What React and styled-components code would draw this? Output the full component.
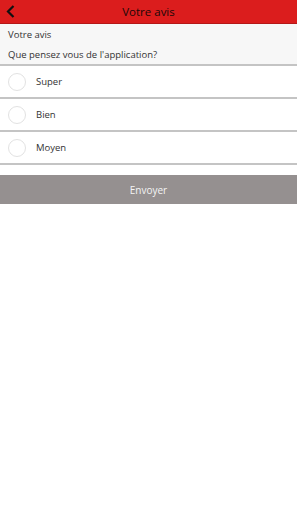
import React from 'react'
import styled, { createGlobalStyle } from 'styled-components'

const GlobalStyle = createGlobalStyle`
  html, body {
    margin: 0;
    padding: 0;
    background: #ffffff;
    font-family: "Open Sans", "Noto Sans", sans-serif;
  }
`

const Page = styled.div`
  width: 297px;
  min-height: 512px;
  background: #ffffff;
`

const TopBar = styled.header`
  position: relative;
  height: 23px;
  background: #db1d1d;
  border-bottom: 1px solid #b41818;
  display: flex;
  align-items: center;
  justify-content: center;
`

const BackButton = styled.button`
  position: absolute;
  left: 3px;
  top: 3px;
  width: 14px;
  height: 16px;
  padding: 0;
  border: 0;
  background: none;
  display: flex;
  align-items: center;
  justify-content: center;
`

const Title = styled.h1`
  margin: 0;
  font-size: 11.5px;
  font-weight: 400;
  color: #1a0808;
`

const Intro = styled.div`
  background: #f7f7f7;
  border-bottom: 2px solid #c4c4c4;
  padding: 4px 8px 0;
  height: 36px;
  display: flex;
  flex-direction: column;
  gap: 7px;
  color: #333333;
  font-size: 9.5px;
`

const Line = styled.div`
  line-height: 13px;
`

const Option = styled.label`
  display: flex;
  align-items: center;
  gap: 10px;
  height: 31px;
  padding-left: 8px;
  border-bottom: 2px solid #c4c4c4;
  font-size: 9.5px;
  color: #333333;
`

const Radio = styled.span`
  width: 16px;
  height: 16px;
  border-radius: 50%;
  border: 1px solid #e2e2e2;
  background: #ffffff;
`

const Submit = styled.button`
  display: block;
  width: 100%;
  height: 29px;
  margin-top: 10px;
  border: 0;
  background: #959090;
  color: #f4f4f4;
  font-family: inherit;
  font-size: 10px;
`

const options = ['Super', 'Bien', 'Moyen']

export default function App() {
  return (
    <Page>
      <GlobalStyle />
      <TopBar>
        <BackButton aria-label="Retour">
          <svg width="9" height="13" viewBox="0 0 9 13">
            <path d="M7.5 1 L2 6.5 L7.5 12" fill="none" stroke="#111" strokeWidth="2.2" />
          </svg>
        </BackButton>
        <Title>Votre avis</Title>
      </TopBar>
      <Intro>
        <Line>Votre avis</Line>
        <Line>Que pensez vous de l'application?</Line>
      </Intro>
      {options.map(o => (
        <Option key={o}>
          <Radio />
          {o}
        </Option>
      ))}
      <Submit>Envoyer</Submit>
    </Page>
  )
}
